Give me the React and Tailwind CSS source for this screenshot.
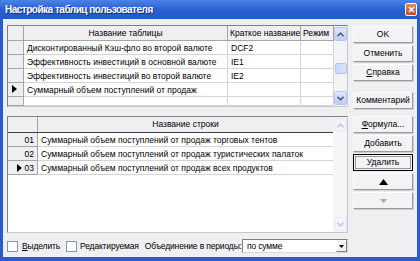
import React from "react";

const FONT = "font-['Liberation_Sans',Arial,sans-serif]";

function RightTri({ className = "" }) {
  return (
    <svg width="5" height="8" viewBox="0 0 5 8" className={className}>
      <path d="M0 0 L5 4 L0 8 Z" fill="#000" />
    </svg>
  );
}

function Chevron({ up, color }) {
  return (
    <svg width="7" height="5" viewBox="0 0 7 5">
      <path
        d={up ? "M0.5 4.2 L3.5 1.2 L6.5 4.2" : "M0.5 0.8 L3.5 3.8 L6.5 0.8"}
        fill="none"
        stroke={color}
        strokeWidth="1.6"
      />
    </svg>
  );
}

function ScrollBtn({ up, disabled }) {
  return (
    <div
      className={
        "h-[14px] w-[13px] rounded-[2px] border flex items-center justify-center " +
        (disabled
          ? "border-[#e3e8f4] bg-[#f1f4fb]"
          : "border-[#b4c6ee] bg-gradient-to-b from-[#dfe8fd] to-[#bccdf7]")
      }
    >
      <Chevron up={up} color={disabled ? "#c3cbdc" : "#4d6185"} />
    </div>
  );
}

function Btn({ children, def, className = "" }) {
  return (
    <div
      className={
        "h-[17px] w-[60px] flex items-center justify-center text-[8.5px] text-black " +
        (def
          ? "border border-black bg-[#f3f2f4]"
          : "border border-t-white border-l-white border-r-[#9a9a9a] border-b-[#9a9a9a] bg-[#f3f2f4] shadow-[1px_1px_0_#d0cfd2]") +
        " " +
        className
      }
    >
      {def ? (
        <div className="h-[13px] w-[56px] border border-[#9a9a9a] flex items-center justify-center">
          {children}
        </div>
      ) : (
        children
      )}
    </div>
  );
}

function TopRow({ name, short, arrow }) {
  return (
    <div className="flex h-[14px]">
      <div className="w-[16px] shrink-0 bg-[#efeef1] border-r border-b border-[#a5a5a5] flex items-center pl-[4px]">
        {arrow && <RightTri />}
      </div>
      <div className="w-[204px] shrink-0 border-r border-b border-[#d4d4d4] pl-[3px] pt-[2px] flex items-center whitespace-nowrap overflow-hidden">
        {name}
      </div>
      <div className="w-[73px] shrink-0 border-r border-b border-[#d4d4d4] pl-[3px] pt-[2px] flex items-center">
        {short}
      </div>
      <div className="w-[33px] shrink-0 border-r border-b border-[#d4d4d4]" />
    </div>
  );
}

function BottomRow({ num, name, arrow }) {
  return (
    <div className="flex h-[14px]">
      <div className="w-[30px] shrink-0 bg-[#efeef1] border-r border-b border-[#a5a5a5] flex items-center justify-between pl-[9px] pr-[3px] pt-[1px]">
        <span className="w-[5px]">{arrow && <RightTri />}</span>
        <span>{num}</span>
      </div>
      <div className="w-[295px] shrink-0 border-b border-[#d4d4d4] pl-[3px] pt-[1px] flex items-center whitespace-nowrap overflow-hidden">
        {name}
      </div>
    </div>
  );
}

function CheckBox() {
  return <div className="w-[11px] h-[11px] border border-[#8b97a8] bg-white shrink-0" />;
}

export default function App() {
  return (
    <div className={"w-[420px] h-[261px] flex flex-col bg-[#2a5bcf] " + FONT}>
      {/* title bar */}
      <div className="h-[19px] shrink-0 flex items-center justify-between pl-[5px] pr-[3px] bg-gradient-to-b from-[#4a82ea] via-[#2c60d2] to-[#2556c6]">
        <span className="text-white font-bold text-[10px] tracking-[-0.5px] [text-shadow:1px_1px_0_#0c2f86]">
          Настройка таблиц пользователя
        </span>
        <div className="w-[12px] h-[13px] rounded-[2px] border border-white bg-gradient-to-b from-[#e8845e] to-[#cc4420] flex items-center justify-center">
          <svg width="7" height="7" viewBox="0 0 7 7">
            <path d="M1 1 L6 6 M6 1 L1 6" stroke="#fff" strokeWidth="1.6" />
          </svg>
        </div>
      </div>

      {/* body */}
      <div className="flex-1 mx-[3px] mb-[4px] bg-[#efeef1] flex text-[8.5px] text-black">
        {/* left */}
        <div className="ml-[4px] w-[341px] flex flex-col">
          {/* top grid */}
          <div className="mt-[6px] h-[82px] flex border border-t-[#808080] border-l-[#808080] border-r-[#c9c9c9] border-b-[#c9c9c9] bg-white overflow-hidden">
            <div className="flex flex-col w-[326px]">
              <div className="flex h-[17px] bg-[#efeef1]">
                <div className="w-[16px] border-r border-b border-[#a5a5a5]" />
                <div className="w-[204px] border-r border-b border-[#a5a5a5] flex items-center justify-center pt-[1px]">
                  Название таблицы
                </div>
                <div className="w-[73px] border-r border-b border-[#a5a5a5] flex items-center pl-[2px] pt-[1px] whitespace-nowrap">
                  Краткое название
                </div>
                <div className="w-[33px] border-r border-b border-[#a5a5a5] flex items-center pl-[2px] pt-[1px]">
                  Режим
                </div>
              </div>
              <TopRow name="Дисконтированный Кэш-фло во второй валюте" short="DCF2" />
              <TopRow name="Эффективность инвестиций в основной валюте" short="IE1" />
              <TopRow name="Эффективность инвестиций во второй валюте" short="IE2" />
              <TopRow name="Суммарный объем поступлений от продаж" short="" arrow />
              <TopRow name="" short="" />
            </div>
            <div className="w-[14px] bg-[#f4f3f6] flex flex-col justify-between items-center py-[1px]">
              <ScrollBtn up />
              <div className="flex-1 w-full flex flex-col items-center pt-[22px]">
                <div className="h-[11px] w-[12px] rounded-[2px] border border-[#b4c6ee] bg-gradient-to-r from-[#c9d6fa] to-[#d9e3fd]" />
              </div>
              <ScrollBtn />
            </div>
          </div>

          {/* bottom grid */}
          <div className="mt-[9px] h-[117px] flex border border-t-[#808080] border-l-[#808080] border-r-[#c9c9c9] border-b-[#c9c9c9] bg-white overflow-hidden">
            <div className="flex flex-col w-[325px]">
              <div className="flex h-[16px] bg-[#efeef1] border-b border-[#404040]">
                <div className="w-[30px] border-r border-[#a5a5a5]" />
                <div className="w-[295px] flex items-center justify-center">Название строки</div>
              </div>
              <BottomRow num="01" name="Суммарный объем поступлений от продаж торговых тентов" />
              <BottomRow num="02" name="Суммарный объем поступлений от продаж туристических палаток" />
              <BottomRow num="03" name="Суммарный объем поступлений от продаж всех продуктов" arrow />
            </div>
            <div className="w-[14px] ml-auto bg-[#f6f6f9] flex flex-col justify-between items-center py-[1px]">
              <ScrollBtn up disabled />
              <ScrollBtn disabled />
            </div>
          </div>

          {/* bottom controls */}
          <div className="mt-[6px] h-[14px] flex items-center tracking-[-0.15px]">
            <CheckBox />
            <span className="ml-[4px]">
              <span className="underline">В</span>ыделить
            </span>
            <div className="ml-[6px]">
              <CheckBox />
            </div>
            <span className="ml-[3px]">Редактируемая</span>
            <span className="ml-[6px] whitespace-nowrap">Объединение в периоды:</span>
            <div className="ml-auto w-[106px] h-[14px] border border-t-[#808080] border-l-[#808080] border-r-[#d8d8d8] border-b-[#d8d8d8] bg-white flex items-center">
              <span className="pl-[4px] flex-1">по сумме</span>
              <div className="w-[11px] h-[12px] bg-[#f1f0f3] border border-t-white border-l-white border-r-[#7c7c7c] border-b-[#7c7c7c] flex items-center justify-center">
                <svg width="5" height="3" viewBox="0 0 5 3">
                  <path d="M0 0 L5 0 L2.5 3 Z" fill="#000" />
                </svg>
              </div>
            </div>
          </div>
        </div>

        {/* right buttons */}
        <div className="ml-[5px] w-[60px] flex flex-col pt-[7px]">
          <Btn>OK</Btn>
          <Btn className="mt-[2px]">Отменить</Btn>
          <Btn className="mt-[2px]">
            <span>
              <span className="underline">С</span>правка
            </span>
          </Btn>
          <Btn className="mt-[11px]">Комментарий</Btn>
          <Btn className="mt-[7px]">
            <span>
              <span className="underline">Ф</span>ормула...
            </span>
          </Btn>
          <Btn className="mt-[2px]">Добавить</Btn>
          <Btn className="mt-[2px]" def>
            Удалить
          </Btn>
          <Btn className="mt-[2px]">
            <svg width="9" height="6" viewBox="0 0 9 6">
              <path d="M0 6 L4.5 0 L9 6 Z" fill="#000" />
            </svg>
          </Btn>
          <Btn className="mt-[2px]">
            <svg width="7" height="4" viewBox="0 0 7 4">
              <path d="M0 0 L7 0 L3.5 4 Z" fill="#a8a8a8" />
            </svg>
          </Btn>
        </div>
      </div>
    </div>
  );
}
